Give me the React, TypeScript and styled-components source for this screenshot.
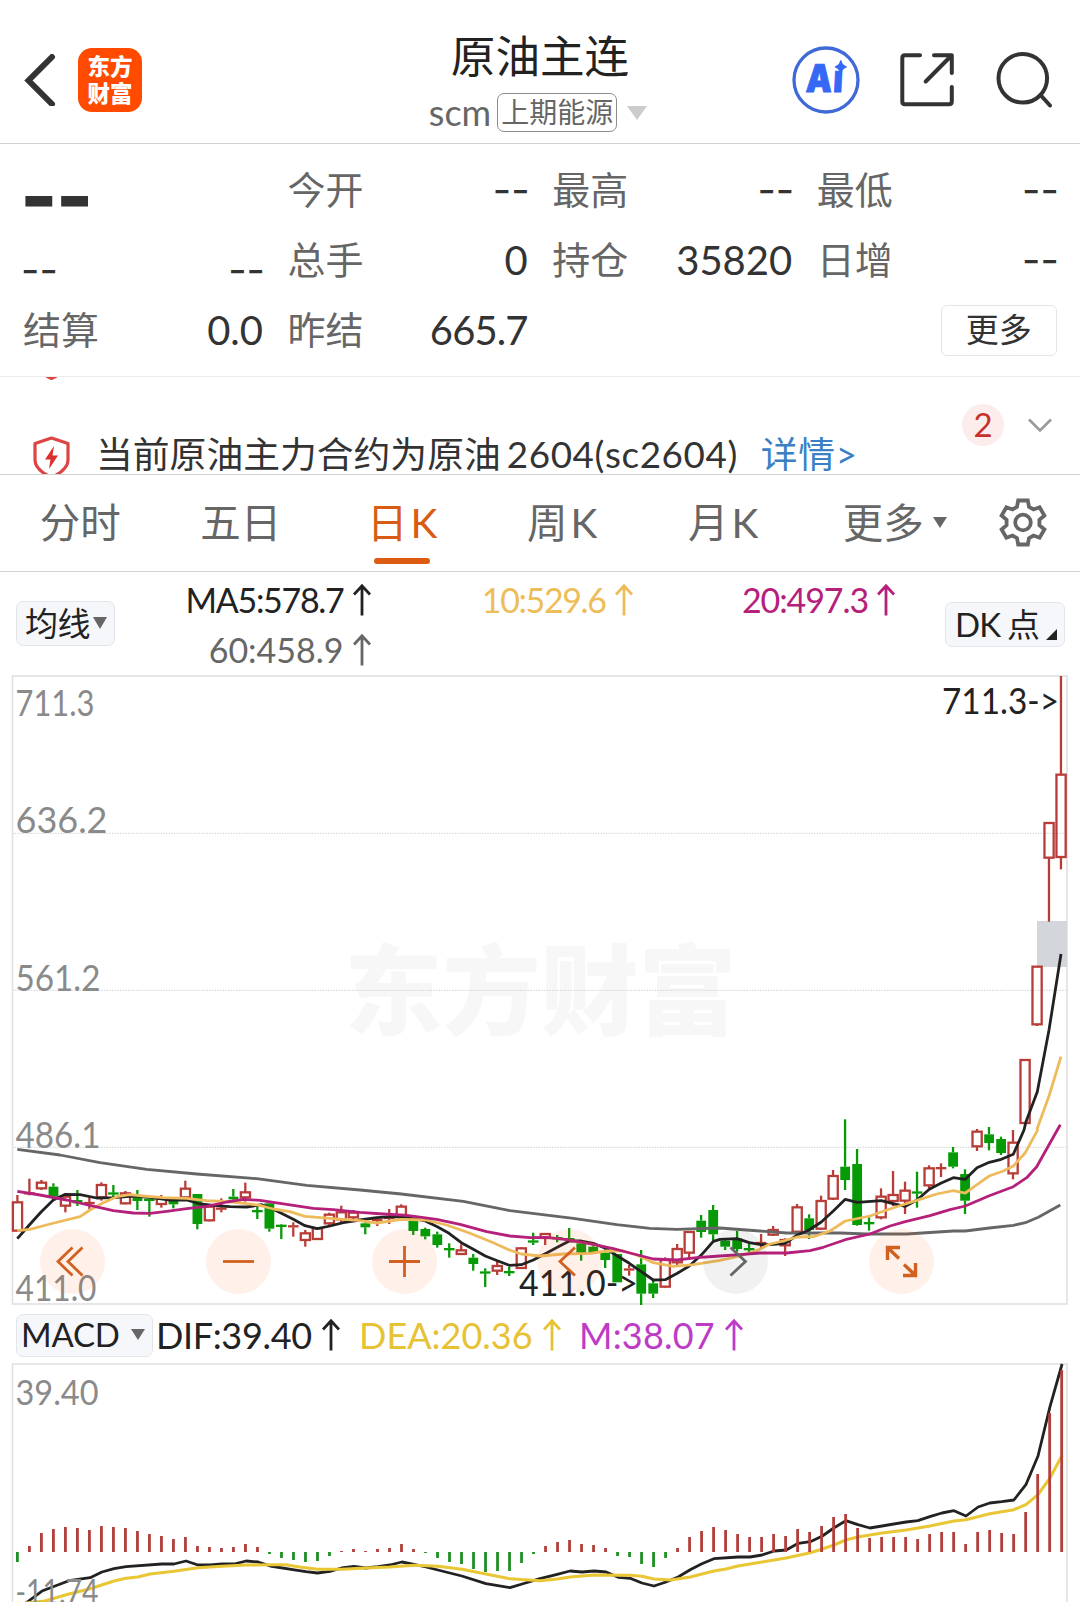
import React from "react";
import styled, { createGlobalStyle } from "styled-components";

const Global = createGlobalStyle`
  * { box-sizing: border-box; }
  body {
    margin: 0;
    background: #fff;
    font-family: Lato, "Noto Sans CJK SC", sans-serif;
    color: #333;
  }
  svg { display: block; flex: none; }
`;

const Page = styled.main`
  width: 1080px;
  height: 1602px;
  overflow: hidden;
  display: flex;
  flex-direction: column;
  background: #fff;
`;

/* ---------- header ---------- */
const Header = styled.header`
  flex: none;
  height: 144px;
  display: grid;
  grid-template-columns: 1fr auto 1fr;
  padding: 30px 28px 0 24px;
  border-bottom: 1px solid #d2d2d2;
`;
const HeaderSide = styled.div<{ $end?: boolean }>`
  display: flex;
  align-items: center;
  height: 100px;
  justify-content: ${(p) => (p.$end ? "flex-end" : "flex-start")};
  gap: ${(p) => (p.$end ? "40px" : "22px")};
`;
const Logo = styled.div`
  width: 64px;
  height: 64px;
  border-radius: 14px;
  background: #ff4a00;
  color: #fff;
  display: flex;
  flex-direction: column;
  justify-content: center;
  align-items: center;
  font: 900 22.5px/27px "Noto Sans CJK SC", sans-serif;
  padding-bottom: 2px;
`;
const TitleBlock = styled.div`
  display: flex;
  flex-direction: column;
  align-items: center;
`;
const Title = styled.h1`
  margin: -1px 0 1px;
  padding-left: 4px;
  font-weight: 400;
  font-size: 44.6px;
  line-height: 54px;
  color: #222;
`;
const SubTitle = styled.div`
  display: flex;
  align-items: center;
  margin-top: 9px;
  height: 39px;
  font-size: 36px;
  line-height: 37px;
  color: #666;
`;
const Exchange = styled.span`
  margin: 0 10px 0 6px;
  height: 39px;
  padding: 0 3px;
  border: 1.5px solid #8c8c8c;
  border-radius: 7px;
  font-size: 28px;
  line-height: 36px;
`;
const Triangle = styled.i<{ $w: number; $h: number; $color: string }>`
  display: block;
  width: 0;
  height: 0;
  flex: none;
  border-left: ${(p) => p.$w / 2}px solid transparent;
  border-right: ${(p) => p.$w / 2}px solid transparent;
  border-top: ${(p) => p.$h}px solid ${(p) => p.$color};
`;

/* ---------- quote ---------- */
const Quote = styled.section`
  flex: none;
  height: 233px;
  padding: 11px 23px 0;
  display: grid;
  grid-template-columns: repeat(4, 240px);
  grid-auto-rows: 70px;
  column-gap: 24.6px;
  border-bottom: 1px solid #ececec;
`;
const Cell = styled.div<{ $drop?: number }>`
  display: flex;
  justify-content: space-between;
  align-items: center;
  padding-top: ${(p) => p.$drop ?? 0}px;
`;
const Label = styled.span`
  font-size: 38px;
  line-height: 50px;
  padding-bottom: 2px;
  color: #666;
`;
const Value = styled.span<{ $track?: number }>`
  font-size: 40px;
  line-height: 50px;
  letter-spacing: ${(p) => p.$track ?? 0}px;
`;
const Dashes = styled.span`
  margin: 0 -2px;
  font-family: Inter, sans-serif;
  font-size: 40px;
  line-height: 50px;
`;
const Price = styled.span`
  font-family: Inter, sans-serif;
  font-weight: 800;
  font-size: 80px;
  line-height: 70px;
  letter-spacing: -2px;
  margin-left: -3px;
  padding-top: 12px;
`;
const MoreButton = styled.button`
  margin-left: auto;
  width: 116px;
  height: 51px;
  border: 1.5px solid #e4e4e4;
  border-radius: 6px;
  background: #fff;
  color: #333;
  font: 400 33px/44px "Noto Sans CJK SC", sans-serif;
  padding: 0 0 4px;
`;

/* ---------- notice ---------- */
const Notice = styled.section`
  flex: none;
  height: 98px;
  display: flex;
  justify-content: space-between;
  border-bottom: 1px solid #d2d2d2;
  overflow: hidden;
`;
const NoticeList = styled.div`
  margin-top: -40px;
  padding-left: 32px;
`;
const NoticeItem = styled.div`
  height: 99px;
  display: flex;
  align-items: flex-start;
`;
const NoticeText = styled.span`
  margin: -4px 0 0 25px;
  font-size: 36.8px;
  line-height: 44px;
  white-space: nowrap;
`;
const NoticeCode = styled.span`
  margin-left: 6px;
  letter-spacing: 0.6px;
`;
const NoticeLink = styled.a`
  margin-left: 23px;
  letter-spacing: 0.6px;
  color: #3b7fc4;
`;
const NoticeTools = styled.div`
  display: flex;
  align-items: center;
  gap: 24px;
  height: 96px;
  padding-right: 28px;
`;
const Badge = styled.span`
  width: 42px;
  height: 42px;
  border-radius: 50%;
  background: #fdecec;
  color: #c5302d;
  font-size: 33px;
  line-height: 41px;
  text-align: center;
`;

/* ---------- period tabs ---------- */
const Tabs = styled.nav`
  flex: none;
  height: 97px;
  display: grid;
  grid-template-columns: repeat(6, 160.5px) 1fr;
  border-bottom: 1px solid #d2d2d2;
`;
const Tab = styled.div<{ $active?: boolean; $shift?: number; $lift?: number }>`
  display: flex;
  align-items: center;
  justify-content: center;
  position: relative;
  padding: 0 0 ${(p) => p.$lift ?? 6}px ${(p) => p.$shift ?? 0}px;
  gap: 9px;
  font-size: 40.5px;
  color: ${(p) => (p.$active ? "#d95b14" : "#666")};
  &::after {
    content: "";
    display: ${(p) => (p.$active ? "block" : "none")};
    position: absolute;
    left: 53px;
    bottom: 7px;
    width: 56px;
    height: 6px;
    border-radius: 3px;
    background: #dd5b12;
  }
`;
const TabLatin = styled.span`
  margin-left: 3px;
`;
const TabMark = styled.span`
  padding-top: 5px;
`;

/* ---------- indicators ---------- */
const MaBar = styled.section`
  flex: none;
  height: 103px;
  display: flex;
  padding: 0 15px 0 16px;
`;
const Chip = styled.button<{ $w: number; $h?: number; $top: number; $pad: number }>`
  flex: none;
  width: ${(p) => p.$w}px;
  height: ${(p) => p.$h ?? 45}px;
  margin-top: ${(p) => p.$top}px;
  padding: 0 0 2px ${(p) => p.$pad}px;
  display: flex;
  align-items: center;
  border: 1.5px solid #e2e5e9;
  border-radius: 7px;
  background: #f6f7fa;
  color: #222;
  font: 400 33px/40px Lato, "Noto Sans CJK SC", sans-serif;
  white-space: nowrap;
`;
const ChipText = styled.span<{ $track?: number; $word?: number }>`
  letter-spacing: ${(p) => p.$track ?? 0}px;
  word-spacing: ${(p) => p.$word ?? 0}px;
`;
const ChipMark = styled.span<{ $gap: number; $drop?: number }>`
  margin-left: ${(p) => p.$gap}px;
  margin-top: ${(p) => p.$drop ?? 0}px;
`;
const MaGrid = styled.div`
  flex: 1;
  display: grid;
  grid-template-columns: 255.5px 262px 262.5px;
  grid-auto-rows: 50px;
  padding-top: 3px;
`;
const Reading = styled.span<{ $color: string; $size?: number; $track?: number }>`
  display: flex;
  justify-content: flex-end;
  align-items: center;
  gap: 9px;
  color: ${(p) => p.$color};
  font-size: ${(p) => p.$size ?? 34}px;
  letter-spacing: ${(p) => p.$track ?? 0}px;
  line-height: 50px;
  white-space: nowrap;
`;
const MacdBar = styled.section`
  flex: none;
  height: 58px;
  display: flex;
  align-items: center;
  padding: 1px 0 0 16px;
`;
const MacdReading = styled(Reading)<{ $w: number; $before: number }>`
  width: ${(p) => p.$w}px;
  margin-left: ${(p) => p.$before}px;
  justify-content: space-between;
  height: 50px;
`;

/* ---------- charts ---------- */
const ChartArea = styled.section`
  flex: none;
  position: relative;
  height: 630px;
`;
const ChartButton = styled.button<{ $x: number; $muted?: boolean }>`
  position: absolute;
  left: ${(p) => p.$x - 32.5}px;
  top: 554px;
  width: 65px;
  height: 65px;
  padding: 0;
  border: 0;
  border-radius: 50%;
  display: grid;
  place-items: center;
  background: ${(p) => (p.$muted ? "rgba(0,0,0,0.055)" : "rgba(250,90,20,0.09)")};
`;
const MacdArea = styled.section`
  flex: none;
  height: 239px;
`;

const STEP = 11.995;
const X0 = 17.4;
const xAt = (i: number) => X0 + i * STEP;

type Candle = [dir: "R" | "G", top: number, bottom: number, high: number, low: number];

// Each segment stores heights in thirds of a pixel, measured down from its base.
const seg = (base: number, rows: Candle[]): Candle[] =>
  rows.map(([d, ...v]) => [d, ...v.map((n) => base + n / 3)] as Candle);

const candles: Candle[] = [
  ...seg(1140, [
    ["R", 187, 272, 165, 272], ["R", 157, 163, 116, 166], ["R", 128, 145, 120, 150], ["G", 140, 170, 130, 170],
    ["R", 170, 197, 165, 217], ["G", 180, 190, 150, 198], ["R", 187, 191, 172, 208], ["R", 135, 172, 127, 182],
    ["G", 158, 163, 135, 172], ["R", 160, 190, 153, 193], ["G", 172, 183, 150, 210], ["G", 177, 182, 177, 230],
    ["R", 176, 192, 165, 203], ["G", 183, 193, 180, 205], ["R", 146, 172, 122, 174], ["G", 162, 252, 162, 268],
    ["R", 200, 241, 197, 244], ["R", 203, 209, 175, 217], ["G", 170, 178, 147, 180], ["R", 157, 172, 128, 185],
    ["G", 211, 216, 198, 237], ["G", 190, 266, 188, 275], ["G", 255, 260, 253, 297], ["R", 256, 262, 247, 290],
    ["R", 280, 300, 270, 320], ["R", 265, 297, 262, 297], ["R", 224, 250, 218, 255], ["R", 217, 238, 197, 247],
    ["R", 218, 232, 210, 240], ["G", 250, 262, 245, 283], ["R", 237, 243, 232, 258], ["R", 231, 237, 207, 252],
    ["R", 200, 225, 193, 228], ["G", 243, 273, 240, 285], ["G", 267, 289, 263, 298], ["G", 283, 315, 275, 323],
    ["G", 325, 330, 310, 353], ["R", 331, 342, 313, 345], ["G", 353, 372, 342, 392], ["G", 395, 400, 385, 441],
    ["R", 378, 392, 360, 405], ["G", 394, 399, 380, 408], ["R", 325, 384, 322, 387], ["G", 302, 307, 278, 315],
    ["R", 282, 294, 280, 315], ["G", 292, 297, 285, 307], ["G", 295, 300, 264, 302], ["G", 310, 340, 308, 362],
    ["G", 320, 338, 316, 342], ["G", 338, 360, 320, 384], ["G", 342, 427, 342, 427], ["R", 385, 392, 375, 407],
    ["G", 373, 461, 330, 495], ["G", 430, 461, 422, 474], ["R", 360, 440, 352, 443], ["R", 327, 367, 312, 375],
    ["R", 276, 338, 274, 358], ["G", 242, 276, 225, 293], ["G", 210, 283, 195, 302],
  ]),
  ...seg(1100, [
    ["G", 422, 440, 415, 450], ["G", 415, 447, 393, 455], ["G", 445, 450, 432, 460], ["R", 426, 432, 402, 445],
    ["R", 390, 404, 378, 408], ["R", 420, 436, 415, 468], ["R", 322, 395, 312, 400], ["G", 355, 390, 343, 417],
    ["R", 303, 386, 287, 390], ["R", 228, 296, 210, 300], ["G", 200, 240, 58, 270], ["G", 192, 375, 147, 377],
    ["G", 367, 372, 352, 392], ["R", 290, 352, 265, 358], ["R", 285, 303, 213, 318], ["R", 272, 302, 245, 342],
    ["G", 275, 280, 215, 323], ["R", 205, 256, 196, 265], ["R", 202, 207, 190, 231], ["G", 157, 200, 141, 205],
    ["G", 222, 302, 208, 342], ["R", 95, 139, 87, 153], ["G", 103, 129, 81, 151], ["G", 117, 159, 110, 165],
    ["R", 128, 220, 90, 238],
  ]),
  ...seg(660, [
    ["R", 1200, 1389, 1200, 1389], ["R", 920, 1093, 920, 1098], ["R", 489, 593, 489, 785], ["R", 344, 591, 48, 628],
  ]),
];

type Pt = [number, number];
const part = (bx: number, by: number, pts: Pt[], sx = 3): Pt[] => pts.map(([x, y]) => [bx + x / sx, by + y / 3]);

const ma5: Pt[] = [
  ...part(0, 1140, [[52, 296], [88, 255], [124, 215], [160, 180], [196, 163], [240, 164], [290, 174], [340, 173], [400, 168], [450, 172], [510, 180], [560, 180], [600, 192], [640, 196], [690, 200], [740, 201], [785, 194], [820, 208], [880, 238], [915, 257], [952, 266], [990, 258], [1030, 248]]),
  ...part(360, 1140, [[0, 240], [50, 233], [100, 230], [150, 234], [196, 243], [232, 260], [267, 280], [304, 308], [340, 328], [376, 348], [412, 362], [448, 376], [484, 374], [520, 360], [556, 341], [592, 322], [628, 303], [664, 303], [700, 310], [736, 325], [771, 347], [808, 370], [844, 395], [880, 420], [916, 419], [952, 400], [988, 378], [1023, 346], [1060, 304]]),
  ...part(720, 1100, [[0, 418], [51, 416], [88, 428], [123, 434], [160, 433], [196, 430], [232, 405], [267, 390], [304, 366], [340, 333], [376, 298], [412, 307], [484, 302], [519, 311], [556, 319], [591, 300], [628, 268], [664, 249], [700, 233], [736, 238], [771, 203], [808, 187], [844, 178], [880, 163], [912, 90]]),
  ...part(900, 660, [[378, 1385], [412, 1295], [447, 1110], [483, 882]]),
];
const ma10: Pt[] = [
  ...part(0, 1140, [[52, 272], [90, 268], [150, 252], [240, 230], [270, 210], [310, 188], [350, 170], [390, 164], [430, 168], [490, 173], [560, 175], [620, 182], [700, 186], [780, 196], [820, 207], [870, 215], [915, 229], [990, 235]]),
  ...part(360, 1140, [[0, 242], [50, 249], [124, 238], [196, 240], [260, 255], [330, 280], [400, 308], [448, 330], [484, 342], [540, 348], [610, 342], [690, 340], [740, 333], [790, 333], [830, 345], [880, 368], [940, 379], [1000, 374]]),
  ...part(720, 1100, [[0, 481], [60, 468], [110, 452], [150, 432], [190, 423], [232, 411], [280, 410], [330, 393], [376, 363], [450, 348], [500, 330], [556, 312], [600, 298], [650, 282], [700, 272], [736, 279], [771, 254], [808, 228], [850, 213], [880, 198], [916, 158], [952, 92]]),
  ...part(900, 660, [[412, 1405], [447, 1308], [483, 1190]]),
];
const ma20: Pt[] = [
  ...part(0, 1140, [[52, 154], [120, 165], [200, 180], [270, 196], [340, 212], [400, 219], [450, 220], [500, 214], [560, 206], [620, 199], [680, 186], [730, 178], [780, 181], [860, 193], [940, 205], [1000, 209]]),
  ...part(360, 1140, [[0, 217], [70, 222], [140, 226], [230, 238], [300, 253], [380, 275], [450, 288], [510, 293], [560, 292], [620, 299], [700, 313], [760, 326], [810, 339], [880, 357], [950, 360], [1010, 353]]),
  ...part(720, 1100, [[0, 468], [60, 464], [120, 459], [200, 459], [270, 452], [310, 442], [376, 419], [450, 402], [510, 378], [556, 365], [630, 347], [690, 329], [736, 318], [808, 287], [880, 260], [920, 233], [950, 200], [985, 138], [1021, 74]]),
];
const ma60: Pt[] = [
  ...part(0, 1140, [[52, 28], [180, 45], [300, 68], [440, 88], [590, 102], [770, 116], [920, 136]]),
  ...part(360, 1140, [[0, 150], [124, 162], [310, 184], [450, 212], [640, 235], [770, 254], [870, 265], [950, 268]]),
  ...part(720, 1100, [[0, 384], [120, 393], [200, 399], [360, 399], [440, 402], [560, 402], [700, 393], [736, 393], [808, 384], [880, 376], [916, 368], [955, 352], [1021, 315]]),
];

const MS = 1568 / 540;
const dif: Pt[] = [
  ...part(0, 1300, [[75, 909], [122, 873], [160, 858], [200, 842], [262, 833], [296, 816], [331, 806], [366, 800], [470, 792], [505, 792], [540, 783], [575, 795], [610, 795], [645, 792], [685, 791], [715, 783], [750, 786], [785, 798], [850, 809], [888, 815], [922, 819], [958, 814], [992, 804], [1028, 799], [1062, 804], [1097, 800], [1132, 795], [1167, 786], [1202, 793], [1237, 801], [1306, 819], [1341, 828], [1411, 851], [1481, 863], [1516, 852]], MS),
  ...part(540, 1300, [[0, 836], [50, 823], [87, 813], [122, 816], [157, 813], [192, 816], [227, 832], [262, 835], [296, 849], [331, 858], [366, 846], [401, 831], [436, 809], [470, 791], [505, 776], [575, 771], [610, 771], [645, 765], [680, 753], [715, 750], [750, 730], [785, 725], [820, 708], [853, 684], [888, 662], [923, 674], [958, 684], [993, 678], [1063, 666], [1097, 662], [1132, 650], [1167, 639], [1202, 632], [1237, 648], [1272, 621], [1306, 609], [1341, 605], [1376, 600], [1411, 554], [1446, 468], [1481, 320], [1516, 192]], MS),
];
const dea: Pt[] = [
  ...part(0, 1300, [[75, 909], [130, 903], [200, 882], [262, 866], [331, 843], [366, 835], [400, 831], [436, 822], [505, 814], [575, 803], [645, 799], [715, 795], [785, 794], [830, 794], [870, 801], [922, 808], [992, 808], [1062, 804], [1132, 801], [1202, 796], [1272, 799], [1341, 808], [1411, 822], [1481, 836]], MS),
  ...part(540, 1300, [[0, 842], [50, 837], [87, 831], [157, 825], [262, 826], [296, 829], [331, 837], [380, 840], [436, 831], [505, 813], [540, 807], [575, 798], [645, 786], [715, 774], [785, 758], [820, 747], [853, 735], [888, 720], [923, 711], [993, 699], [1063, 690], [1132, 678], [1202, 663], [1237, 659], [1306, 641], [1376, 629], [1411, 614], [1446, 584], [1481, 534], [1516, 466]], MS),
];
// Histogram heights in thirds of a pixel; positive rises above the zero line.
const hist = [
  -30, 18, 57, 69, 75, 72, 66, 78, 75, 72, 63, 54, 48, 39, 45, 18, 15, 12, 15, 24, 15, -6, -18, -24, -30, -27, -12, 3, 9,
  3, 9, 12, 24, 9, -3, -18, -30, -36, -51, -60, -57, -57, -33, -6, 18, 30, 36, 24, 21, 12, -12, -15, -36, -45, -18, 12,
  45, 63, 75, 66, 54, 45, 45, 54, 48, 69, 60, 78, 105, 114, 72, 42, 45, 45, 45, 39, 54, 60, 60, 24, 60, 66, 57, 54, 120,
  234, 417, 546,
];

const poly = (pts: Pt[]) => pts.map(([x, y]) => `${x.toFixed(1)},${y.toFixed(1)}`).join(" ");

const RED = "#b83c38";
const GREEN = "#079a07";

const CandleMark = ({ i, c }: { i: number; c: Candle }) => {
  const [dir, top, bottom, high, low] = c;
  const x = xAt(i);
  const color = dir === "R" ? RED : GREEN;
  const flat = bottom - top < 2.4;
  return (
    <g stroke={color} strokeWidth="2.3" fill="none">
      {high < top && <line x1={x} x2={x} y1={high} y2={top} />}
      {low > bottom && <line x1={x} x2={x} y1={bottom} y2={low} />}
      {flat && <line x1={x - 5.3} x2={x + 5.3} y1={(top + bottom) / 2} y2={(top + bottom) / 2} />}
      {!flat && dir === "R" && <rect x={x - 4.5} y={top} width="9.2" height={bottom - top} />}
      {!flat && dir === "G" && <rect x={x - 4.8} y={top} width="9.8" height={bottom - top} fill={color} stroke="none" />}
    </g>
  );
};

const AxisText = ({ x = 15.5, y, w, size = 37, color = "#8a8a8a", children }: {
  x?: number; y: number; w: number; size?: number; color?: string; children: string;
}) => (
  <text x={x} y={y} textLength={w} lengthAdjust="spacingAndGlyphs" fontSize={size} fill={color}>
    {children}
  </text>
);

const KChart = () => (
  <svg width="1080" height="630" viewBox="0 675 1080 630">
    <text x="540.5" y="1027" textAnchor="middle" fontFamily="Noto Sans CJK SC" fontWeight="900" fontSize="98" fill="#f7f7f7">
      东方财富
    </text>
    {[833.3, 990.3, 1147.3].map((y) => (
      <line key={y} x1="12" x2="1067" y1={y} y2={y} stroke="#d2d2d2" strokeWidth="1" strokeDasharray="1.5 1.2" />
    ))}
    <rect x="12.5" y="676" width="1054.5" height="628" fill="none" stroke="#e0e0e0" strokeWidth="1.6" />
    <rect x="1037" y="921" width="30" height="46" fill="#d3d7db" />
    {candles.map((c, i) => (
      <CandleMark key={i} i={i} c={c} />
    ))}
    <g fill="none" strokeWidth="2.8" strokeLinejoin="round">
      <polyline points={poly(ma60)} stroke="#666" />
      <polyline points={poly(ma5)} stroke="#222" />
      <polyline points={poly(ma10)} stroke="#eebb5c" />
      <polyline points={poly(ma20)} stroke="#b5207a" />
    </g>
    <AxisText y={716} w={79}>711.3</AxisText>
    <AxisText y={833} w={92}>636.2</AxisText>
    <AxisText y={991} w={85}>561.2</AxisText>
    <AxisText y={1148} w={85}>486.1</AxisText>
    <AxisText y={1301} w={81}>411.0</AxisText>
    <AxisText x={942} y={714} w={117} color="#222">711.3-&gt;</AxisText>
    <AxisText x={519} y={1296} w={119} color="#222">411.0-&gt;</AxisText>
  </svg>
);

const MacdChart = () => (
  <svg width="1080" height="239" viewBox="0 1363 1080 239">
    <path d="M12.5 1602V1364H1067V1602" fill="none" stroke="#e0e0e0" strokeWidth="1.6" />
    <polyline points={poly(dif)} fill="none" stroke="#222" strokeWidth="2.8" strokeLinejoin="round" />
    <polyline points={poly(dea)} fill="none" stroke="#e9c634" strokeWidth="3" strokeLinejoin="round" />
    {hist.map((v, i) => (
      <rect
        key={i}
        x={xAt(i) + 0.7 * (i / 87) - 1.4}
        y={v > 0 ? 1552 - v / 3 : 1552}
        width="2.8"
        height={Math.abs(v) / 3}
        fill={v > 0 ? "#b23f3b" : "#1f9025"}
      />
    ))}
    <AxisText y={1405} w={83} size={35}>39.40</AxisText>
    <AxisText y={1604} w={83} size={35}>-11.74</AxisText>
  </svg>
);

/* ---------- icons ---------- */
const BackIcon = () => (
  <svg width="32" height="52" viewBox="24.5 54 32 52" fill="none" stroke="#333" strokeWidth="6" strokeLinecap="round">
    <path d="M52.5 57L29 80.5L52.5 104" />
  </svg>
);
const AiIcon = () => (
  <svg width="68" height="68" viewBox="792 46 68 68">
    <circle cx="826" cy="80" r="32" fill="none" stroke="#4069d8" strokeWidth="3.3" />
    <g fill="#3568f5">
      <text transform="translate(805.5 92) skewX(-3) scale(.86 1)" fontFamily="Inter" fontWeight="900" fontSize="38" letterSpacing="1.5" stroke="#3568f5" strokeWidth="1">Aı</text>
      <path d="M840.8 61Q841.6 65.700 846 67Q841.600 68.300 840.800 73Q840 68.300 835.600 67Q840 65.700 840.800 61Z" stroke="#3568f5" strokeWidth="1.600" strokeLinejoin="round" />
    </g>
  </svg>
);
const ShareIcon = () => (
  <svg width="56" height="56" viewBox="900 52 56 56" fill="none" stroke="#333" strokeWidth="4" strokeLinecap="round" strokeLinejoin="round">
    <path d="M920 55.3H905Q902.3 55.3 902.3 58V101.5Q902.3 104.3 905 104.3H949Q951.8 104.3 951.8 101.5V87" />
    <path d="M934 55.3H951.8V73M951 56L925.7 81.5" />
  </svg>
);
const SearchIcon = () => (
  <svg width="56" height="56" viewBox="995.5 51 56 56" fill="none" stroke="#333" strokeWidth="4" strokeLinecap="round">
    <circle cx="1022.3" cy="77.3" r="24.3" />
    <path d="M1040 94L1049.5 104.5" />
  </svg>
);
const ShieldIcon = () => (
  <svg width="39" height="43" viewBox="0 0 39 43">
    <path d="M19.5 2L36 7.5V24C36 32 29 37 19.5 41.5C10 37 3 32 3 24V7.5Z" fill="none" stroke="#dc4543" strokeWidth="3.2" strokeLinejoin="round" />
    <path d="M22 10L13 23.5H18.5L17 33L26 19.5H20.5Z" fill="#d92f2d" />
  </svg>
);
const ChevronDown = () => (
  <svg width="24" height="15" viewBox="0 0 24 15" fill="none" stroke="#999" strokeWidth="2.6">
    <path d="M1 1.5L12 12.5L23 1.5" />
  </svg>
);
const GearIcon = () => (
  <svg width="48" height="49" viewBox="-24 -24.5 48 49" fill="none" stroke="#666" strokeWidth="3.8">
    <path d="M-4.8 -22H4.8L6 -15.6L10.5 -13L16.6 -15.2L21.4 -7L16.4 -2.7V2.7L21.4 7L16.6 15.2L10.5 13L6 15.6L4.8 22H-4.8L-6 15.6L-10.5 13L-16.6 15.2L-21.4 7L-16.4 2.7V-2.7L-21.4 -7L-16.6 -15.2L-10.5 -13L-6 -15.6Z" />
    <circle r="7.8" />
  </svg>
);
const UpArrow = () => (
  <svg width="18" height="32" viewBox="0 0 18 32" fill="none" stroke="currentColor" strokeWidth="2.8">
    <path d="M9 31.5V2M1 10.5L9 1.8L17 10.5" />
  </svg>
);
const CornerMark = () => (
  <svg width="11" height="11" viewBox="0 0 11 11">
    <path d="M11 0V11H0Z" fill="#222" />
  </svg>
);
const Glyph = ({ d, color = "#d2601f" }: { d: string; color?: string }) => (
  <svg width="65" height="65" viewBox="-32.5 -32.5 65 65" fill="none" stroke={color} strokeWidth="2.8">
    <path d={d} />
  </svg>
);
const ExpandGlyph = () => (
  <svg width="65" height="65" viewBox="-32.5 -32.5 65 65" fill="none" stroke="#d2601f" strokeWidth="3.4">
    <path d="M-1.5 -14H-14V-1.5M-14 -14L-2.5 -3M1.5 14H14V1.5M14 14L2.5 3" />
  </svg>
);

const rows: [string, string][][] = [
  [["今开", "--"], ["最高", "--"], ["最低", "--"]],
  [["总手", "0"], ["持仓", "35820"], ["日增", "--"]],
];

const Figure = ({ v }: { v: string }) => (v === "--" ? <Dashes>{v}</Dashes> : <Value>{v}</Value>);

export default function App() {
  return (
    <Page>
      <Global />
      <Header>
        <HeaderSide>
          <BackIcon />
          <Logo>
            <span>东方</span>
            <span>财富</span>
          </Logo>
        </HeaderSide>
        <TitleBlock>
          <Title>原油主连</Title>
          <SubTitle>
            scm<Exchange>上期能源</Exchange>
            <Triangle $w={21} $h={14} $color="#ccc" />
          </SubTitle>
        </TitleBlock>
        <HeaderSide $end>
          <AiIcon />
          <ShareIcon />
          <SearchIcon />
        </HeaderSide>
      </Header>

      <Quote>
        <Cell><Price>--</Price></Cell>
        {rows[0].map(([k, v]) => (
          <Cell key={k}><Label>{k}</Label><Figure v={v} /></Cell>
        ))}
        <Cell $drop={20}><Figure v="--" /><Figure v="--" /></Cell>
        {rows[1].map(([k, v]) => (
          <Cell key={k}><Label>{k}</Label><Figure v={v} /></Cell>
        ))}
        <Cell><Label>结算</Label><Value>0.0</Value></Cell>
        <Cell><Label>昨结</Label><Value $track={-0.9}>665.7</Value></Cell>
        <Cell />
        <Cell><MoreButton>更多</MoreButton></Cell>
      </Quote>

      <Notice>
        <NoticeList>
          <NoticeItem><ShieldIcon /></NoticeItem>
          <NoticeItem>
            <ShieldIcon />
            <NoticeText>
              当前原油主力合约为原油<NoticeCode>2604(sc2604)</NoticeCode>
              <NoticeLink>详情&gt;</NoticeLink>
            </NoticeText>
          </NoticeItem>
        </NoticeList>
        <NoticeTools>
          <Badge>2</Badge>
          <ChevronDown />
        </NoticeTools>
      </Notice>

      <Tabs>
        <Tab>分时</Tab>
        <Tab>五日</Tab>
        <Tab $active $shift={2}><span>日<TabLatin>K</TabLatin></span></Tab>
        <Tab $shift={1}><span>周<TabLatin>K</TabLatin></span></Tab>
        <Tab $shift={2}><span>月<TabLatin>K</TabLatin></span></Tab>
        <Tab $shift={24}>更多<TabMark><Triangle $w={14} $h={11} $color="#666" /></TabMark></Tab>
        <Tab $shift={2} $lift={2}><GearIcon /></Tab>
      </Tabs>

      <MaBar>
        <Chip $w={99} $top={29} $h={45} $pad={8}>
          <ChipText $track={-0.5}>均线</ChipText>
          <ChipMark $gap={3}><Triangle $w={14} $h={12} $color="#666" /></ChipMark>
        </Chip>
        <MaGrid>
          <Reading $color="#222" $track={-1.3}>MA5:578.7<UpArrow /></Reading>
          <Reading $color="#edbd58" $track={-1.4}>10:529.6<UpArrow /></Reading>
          <Reading $color="#b5207a" $track={-1.1}>20:497.3<UpArrow /></Reading>
          <Reading $color="#666">60:458.9<UpArrow /></Reading>
        </MaGrid>
        <Chip $w={120} $top={30} $pad={9}>
          <ChipText $track={-0.8} $word={-1}>DK 点</ChipText>
          <ChipMark $gap={7} $drop={21}><CornerMark /></ChipMark>
        </Chip>
      </MaBar>

      <ChartArea>
        <KChart />
        <ChartButton $x={72.5}><Glyph d="M0 -14L-14.5 0L0 14M10 -14L-4.5 0L10 14" /></ChartButton>
        <ChartButton $x={238.5}><Glyph d="M-15.5 0H15.5" /></ChartButton>
        <ChartButton $x={404.5}><Glyph d="M-15.5 0H15.5M0 -15.5V15.5" /></ChartButton>
        <ChartButton $x={569.5}><Glyph d="M5.5 -14L-9.5 0L5.5 14" /></ChartButton>
        <ChartButton $x={735} $muted><Glyph color="#666" d="M-5 -14L10 0L-5 14" /></ChartButton>
        <ChartButton $x={901.5}><ExpandGlyph /></ChartButton>
      </ChartArea>

      <MacdBar>
        <Chip $w={137} $h={43} $top={1} $pad={4}>
          <ChipText $track={-0.2}>MACD</ChipText>
          <ChipMark $gap={11}><Triangle $w={14} $h={11} $color="#666" /></ChipMark>
        </Chip>
        <MacdReading $w={184} $before={3} $size={36} $track={-0.3} $color="#222">DIF:39.40<UpArrow /></MacdReading>
        <MacdReading $w={202} $before={19} $size={36} $color="#e6c234">DEA:20.36<UpArrow /></MacdReading>
        <MacdReading $w={164} $before={18} $size={36} $track={0.2} $color="#bd3cc6">M:38.07<UpArrow /></MacdReading>
      </MacdBar>
      <MacdArea>
        <MacdChart />
      </MacdArea>
    </Page>
  );
}
